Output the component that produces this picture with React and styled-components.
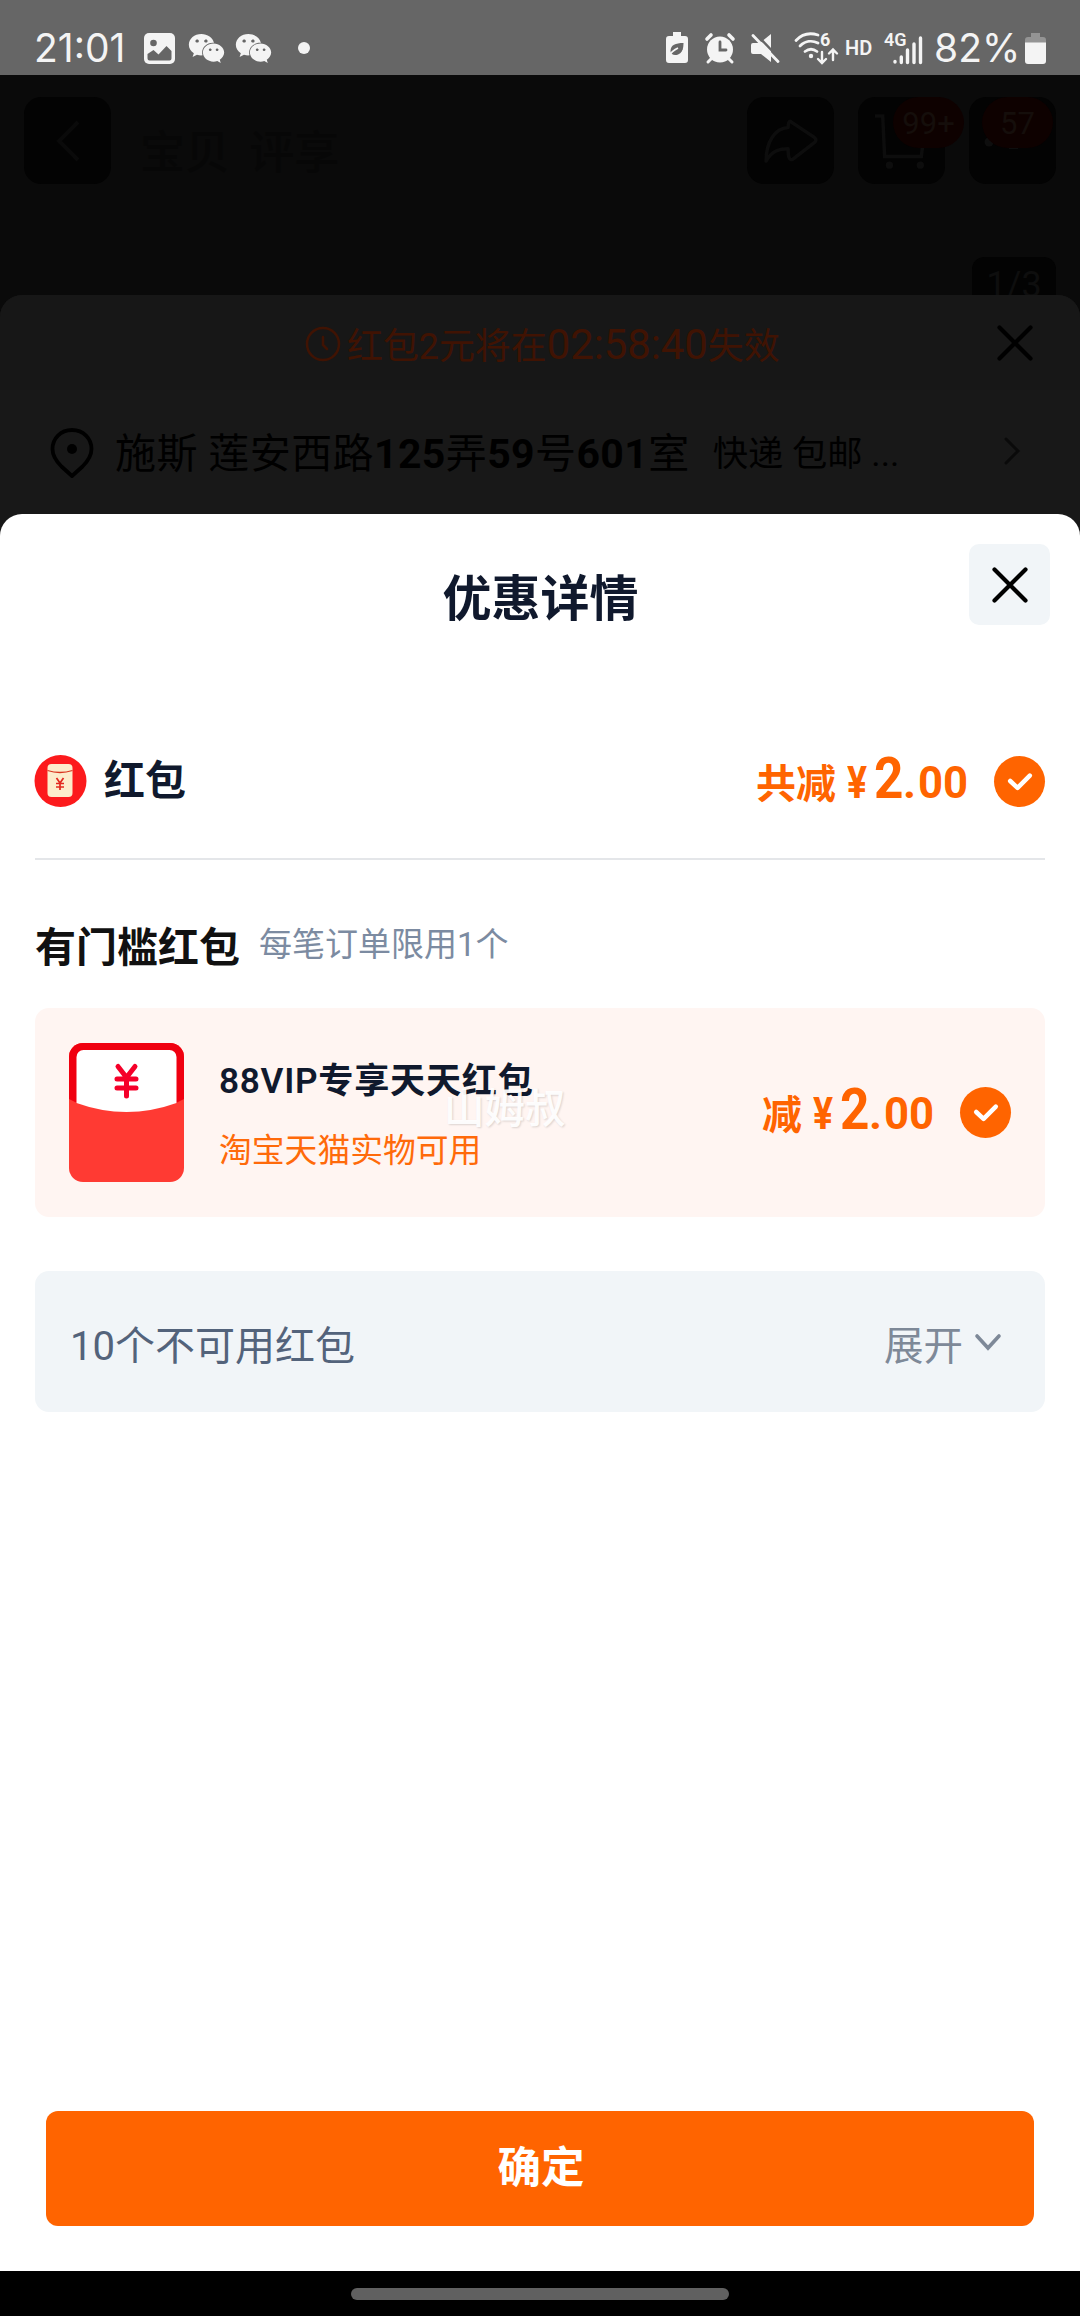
import styled, { createGlobalStyle } from "styled-components";
import { FaWeixin } from "react-icons/fa";

const GlobalStyle = createGlobalStyle`
  * {
    box-sizing: border-box;
  }

  body {
    margin: 0;
    background-color: #000;
    font-family: Roboto, "Noto Sans CJK SC", sans-serif;
  }

  svg {
    display: block;
    flex-shrink: 0;
    overflow: visible;
  }
`;

const Page = styled.div`
  width: 1080px;
  height: 2316px;
  display: flex;
  flex-direction: column;
  overflow: hidden;
  background-color: #0a0a0a;
`;

/* status bar */

const StatusBar = styled.header`
  height: 75px;
  padding: 21px 33px 0 34px;
  display: flex;
  justify-content: space-between;
  background-color: #666;
  color: #f4f4f4;
`;

const StatusGroup = styled.div`
  height: 54px;
  display: flex;
  align-items: center;
`;

const StatusText = styled.span`
  width: ${(props) => props.$width}px;
  font-family: Inter, sans-serif;
  font-size: 39px;
  line-height: 54px;
  white-space: nowrap;
`;

const StatusIcon = styled.span`
  margin-left: ${(props) => props.$gap}px;
`;

const HdText = styled.span`
  margin-left: 8px;
  width: 29px;
  font-size: 20px;
  font-weight: 600;
  line-height: 54px;
`;

const Dot = styled.i`
  width: 12px;
  height: 12px;
  margin-left: 26px;
  border-radius: 50%;
  background-color: #f4f4f4;
`;

/* dimmed product page */

const ProductHeader = styled.div`
  height: 220px;
  padding: 22px 24px 0;
  display: flex;
  flex-direction: column;
`;

const ProductNav = styled.div`
  display: flex;
  gap: 24px;
`;

const NavButton = styled.div`
  position: relative;
  width: 87px;
  height: 87px;
  display: flex;
  align-items: center;
  justify-content: center;
  border-radius: 17px;
  background-color: #030303;
`;

const NavTabs = styled.div`
  flex: 1;
  padding: 27px 0 0 5px;
  font-size: 45px;
  font-weight: 500;
  line-height: 60px;
  word-spacing: 8px;
  color: #070707;
`;

const Badge = styled.span`
  position: absolute;
  top: 0;
  left: ${(props) => props.$left}px;
  width: 71px;
  height: 51px;
  border-radius: 26px;
  background-color: #0e0100;
  color: #150e0b;
  font-size: 31px;
  line-height: 53px;
  text-align: center;
`;

const PageCount = styled.span`
  align-self: flex-end;
  width: 84px;
  height: 38px;
  margin-top: 73px;
  overflow: hidden;
  border-radius: 12px 12px 0 0;
  background-color: #030303;
  color: #0e0e0e;
  font-size: 36px;
  line-height: 56px;
  text-align: center;
`;

const OrderSheet = styled.section`
  height: 219px;
  border-radius: 22px 22px 0 0;
  background-color: #181818;
`;

const ExpireRow = styled.div`
  height: 95px;
  padding: 0 47px 0 305px;
  display: flex;
  align-items: center;
  border-radius: 22px 22px 0 0;
  background-color: #171717;
`;

const ExpireText = styled.p`
  flex: 1;
  margin: 6px 0 0 6px;
  font-size: 36px;
  line-height: 50px;
  letter-spacing: -0.1px;
  color: #401303;
`;

const Countdown = styled.span`
  font-size: 42px;
`;

const AddressRow = styled.div`
  height: 124px;
  padding: 2px 58px 0 50px;
  display: flex;
  align-items: center;
  color: #000;
`;

const Address = styled.span`
  margin: 2px 0 0 21px;
  font-size: 41px;
  font-weight: 400;
  line-height: 60px;
  letter-spacing: 0.4px;
  white-space: nowrap;

  b {
    font-weight: 700;
  }
`;

const Shipping = styled.span`
  flex: 1;
  margin: 2px 0 0 23px;
  font-size: 35.3px;
  line-height: 60px;
`;

/* discount sheet */

const SheetWrap = styled.div`
  height: 1757px;
  background-color: #181818;
`;

const Sheet = styled.section`
  height: 100%;
  display: flex;
  flex-direction: column;
  border-radius: 22px 22px 0 0;
  background-color: #fff;
`;

const SheetHeader = styled.div`
  height: 190px;
  padding: 30px 30px 0 112px;
  display: flex;
`;

const Title = styled.h1`
  flex: 1;
  margin: 20px 0 0;
  font-size: 49px;
  font-weight: 700;
  line-height: 72px;
  text-align: center;
  color: #10192d;
`;

const CloseButton = styled.button`
  width: 81px;
  height: 81px;
  padding: 0;
  display: flex;
  align-items: center;
  justify-content: center;
  border: none;
  border-radius: 10px;
  background-color: #f1f5f8;
`;

const SummaryRow = styled.div`
  height: 156px;
  margin: 0 35px;
  display: flex;
  align-items: center;
  border-bottom: 2px solid #e4e6e9;
`;

const SummaryLabel = styled.span`
  flex: 1;
  margin-left: 17px;
  font-size: 41px;
  font-weight: 700;
  line-height: 60px;
  color: #10192d;
`;

const PriceBox = styled.div`
  margin: 1px 28px 0 0;
  display: flex;
  align-items: baseline;
  color: #ff6400;
  font-weight: 700;
  line-height: 60px;
`;

const PriceLabel = styled.span`
  font-size: 40px;
`;

const PricePart = styled.span`
  display: inline-block;
  width: ${(props) => props.$width}px;
  font-size: ${(props) => props.$size}px;
  transform: scaleX(${(props) => props.$scale || 1});
  transform-origin: left;
`;

const GroupTitle = styled.div`
  height: 148px;
  padding: 58px 35px 0;
  display: flex;
`;

const GroupName = styled.span`
  font-size: 41px;
  font-weight: 700;
  line-height: 60px;
  color: #111;
`;

const GroupHint = styled.span`
  margin-left: 19px;
  font-size: 33px;
  line-height: 54px;
  color: #7c8ba1;
`;

const Coupon = styled.div`
  position: relative;
  height: 209px;
  margin: 0 35px;
  padding: 0 34px;
  display: flex;
  align-items: center;
  border-radius: 14px;
  background-color: #fff5f2;
`;

const CouponInfo = styled.div`
  flex: 1;
  margin: 6px 0 0 35px;
`;

const CouponName = styled.p`
  margin: 0;
  font-size: 35.2px;
  font-weight: 600;
  line-height: 54px;
  letter-spacing: 0.7px;
  color: #10192d;
`;

const CouponScope = styled.p`
  margin: 16px 0 0;
  font-size: 32.8px;
  line-height: 54px;
  color: #ff6a0a;
`;

const Watermark = styled.span`
  position: absolute;
  top: 71px;
  left: 409px;
  font-size: 40.5px;
  font-weight: 500;
  line-height: 60px;
  color: rgba(255, 255, 255, 0.94);
  text-shadow: 1px 1px 2px rgba(0, 0, 0, 0.14);
`;

const Unavailable = styled.div`
  height: 141px;
  margin: 54px 35px 0;
  padding: 10px 43px 0 35px;
  display: flex;
  align-items: center;
  border-radius: 14px;
  background-color: #f1f5f8;
  font-size: 40px;
  line-height: 60px;
  color: #53637b;
`;

const Expand = styled.span`
  margin-left: auto;
  display: flex;
  align-items: center;
  gap: 11px;
  font-size: 39.5px;
  color: #7e8998;
`;

const ConfirmButton = styled.button`
  height: 115px;
  margin: auto 46px 45px;
  padding: 0 0 8px 2px;
  border: none;
  border-radius: 12px;
  background-color: #ff6400;
  color: #fff;
  font-family: inherit;
  font-size: 43.5px;
  font-weight: 700;
`;

const GestureBar = styled.footer`
  height: 45px;
  padding-top: 17px;
  background-color: #000;
`;

const GesturePill = styled.div`
  width: 378px;
  height: 12px;
  margin: 0 auto;
  border-radius: 6px;
  background-color: #606060;
`;

function CloseIcon() {
  return (
    <svg width="36" height="36" viewBox="0 0 36 36" fill="none" stroke="#000" strokeWidth="4.2" strokeLinecap="round">
      <path d="M2.500 2.500l31 31M33.500 2.500l-31 31" />
    </svg>
  );
}

function CheckIcon() {
  return (
    <svg width="51" height="51" viewBox="0 0 52 52" fill="none">
      <circle cx="26" cy="26" r="26" fill="#ff6400" />
      <path d="M16.500 25.500l7.500 7 12.500-12.500" stroke="#fff" strokeWidth="4.600" strokeLinecap="round" strokeLinejoin="round" />
    </svg>
  );
}

function Price({ label }) {
  return (
    <PriceBox>
      <PriceLabel>{label}</PriceLabel>
      <PricePart $size={45} $width={27} $scale={0.83} style={{ marginLeft: 11 }}>¥</PricePart>
      <PricePart $size={57} $width={29} $scale={0.9}>2</PricePart>
      <PricePart $size={45} $width={15}>.</PricePart>
      <PricePart $size={45} $width={48} $scale={0.97}>00</PricePart>
    </PriceBox>
  );
}

function StatusIcons() {
  return (
    <StatusGroup>
      {/* battery saver */}
      <svg width="22" height="32" viewBox="0 0 22 32">
        <path d="M7 0h8v4h4a3 3 0 0 1 3 3v21a3 3 0 0 1-3 3H3a3 3 0 0 1-3-3V7a3 3 0 0 1 3-3h4z" fill="#f4f4f4" />
        <path d="M17.500 11c-8 0-13 2-13 8 0 5 7 5 10 2 2-2 3-5 3-10z" fill="#666" />
        <path d="M3 24c2-4 5-6 9-8" stroke="#f4f4f4" strokeWidth="1.800" fill="none" />
      </svg>
      <StatusIcon $gap={17}>
        <svg width="30" height="31" viewBox="0 0 30 31" fill="none" stroke="#f4f4f4" strokeLinecap="round">
          <circle cx="15" cy="16.500" r="13" fill="#f4f4f4" stroke="none" />
          <path d="M2 6l4-4M28 6l-4-4" strokeWidth="3.600" />
          <path d="M6 26l-3 3M24 26l3 3" strokeWidth="3" />
          <path d="M15 9v8h6" stroke="#666" strokeWidth="2.800" />
        </svg>
      </StatusIcon>
      <StatusIcon $gap={15}>
        <svg width="30" height="31" viewBox="0 0 30 31">
          <path d="M3 10h7L21 1v28l-10-8H3a2 2 0 0 1-2-2v-7a2 2 0 0 1 2-2z" fill="#f4f4f4" />
          <path d="M6 1l22 23" stroke="#666" strokeWidth="2.500" />
          <path d="M3 2.500l25 26" stroke="#f4f4f4" strokeWidth="2.800" strokeLinecap="round" />
        </svg>
      </StatusIcon>
      <StatusIcon $gap={14}>
        <svg width="43" height="33" viewBox="0 0 43 33" fill="none" stroke="#f4f4f4" strokeWidth="2.800" strokeLinecap="round">
          <path d="M2 8.500C8 2 16 .5 24 3M6 14c5-5 12-6 18-3M11 19.500c4-3 8-3 12 0" />
          <circle cx="17" cy="24" r="2.200" fill="#f4f4f4" stroke="none" />
          <path d="M28 20v10M24 27l4 4 4-4M39 28V18M35 21.500l4-4 4 4" strokeWidth="2.400" />
          <text x="26" y="14" fontSize="18" fontWeight="700" fill="#f4f4f4" stroke="none">6</text>
        </svg>
      </StatusIcon>
      <HdText>HD</HdText>
      <StatusIcon $gap={11}>
        <svg width="40" height="33" viewBox="0 0 40 33" fill="none" stroke="#f4f4f4" strokeWidth="3.400" strokeLinecap="round">
          <text x="-1" y="13.500" fontSize="18" fontWeight="600" fill="#f4f4f4" stroke="none">4G</text>
          <path d="M10 29.500v.5M16.300 25v5.500M22.500 18v12.500M29 12v18.500M35.500 6v24.500" />
        </svg>
      </StatusIcon>
      <StatusText $width={88} style={{ marginLeft: 9 }}>82%</StatusText>
      {/* battery level */}
      <svg width="21" height="31" viewBox="0 0 21 31" style={{ marginLeft: 3, marginRight: 1 }}>
        <path d="M6 0h9v4h3a3 3 0 0 1 3 3v3H0V7a3 3 0 0 1 3-3h3z" fill="#949494" />
        <path d="M0 9.500h21V28a3 3 0 0 1-3 3H3a3 3 0 0 1-3-3z" fill="#f4f4f4" />
      </svg>
    </StatusGroup>
  );
}

function App() {
  return (
    <>
      <GlobalStyle />
      <Page>
        <StatusBar>
          <StatusGroup>
            <StatusText $width={110}>21:01</StatusText>
            <svg width="31" height="31" viewBox="0 0 31 31">
              <rect width="31" height="31" rx="5" fill="#f4f4f4" />
              <circle cx="9.500" cy="10" r="3.300" fill="#666" />
              <path d="M3.500 21l6-4 5 4.500 8-8.500 5 5v7.500a2 2 0 0 1-2 2h-20a2 2 0 0 1-2-2z" fill="#666" />
            </svg>
            <StatusIcon $gap={13}><FaWeixin size={37} /></StatusIcon>
            <StatusIcon $gap={10}><FaWeixin size={37} /></StatusIcon>
            <Dot />
          </StatusGroup>
          <StatusIcons />
        </StatusBar>

        <ProductHeader>
          <ProductNav>
            <NavButton>
              <svg width="24" height="42" viewBox="0 0 24 42" fill="none" stroke="#0a0a0a" strokeWidth="4">
                <path d="M22 2L3 21l19 19" />
              </svg>
            </NavButton>
            <NavTabs>宝贝 评享</NavTabs>
            <NavButton>
              <svg width="56" height="46" viewBox="0 0 58 48" fill="none" stroke="#0d0d0d" strokeWidth="3.600" strokeLinejoin="round">
                <path d="M29 4c-2-2-3 2-3 6C12 11 3 25 3 45c6-11 14-13 23-13 0 8 1 13 5 11l22-17q4-3 0-6z" />
              </svg>
            </NavButton>
            <NavButton>
              <svg width="58" height="56" viewBox="0 0 60 58" fill="none" stroke="#0d0d0d" strokeWidth="3.600">
                <path d="M2 3h8l2 42h38l4-32H22" />
                <circle cx="17" cy="54" r="2" />
                <circle cx="49" cy="54" r="2" />
              </svg>
              <Badge $left={35}>99+</Badge>
            </NavButton>
            <NavButton>
              <svg width="60" height="20" viewBox="0 0 60 20" fill="#0e0e0e">
                <circle cx="6" cy="11" r="4.500" />
                <path d="M26 15h9v3h-9z" />
              </svg>
              <Badge $left={13}>57</Badge>
            </NavButton>
          </ProductNav>
          <PageCount>1/3</PageCount>
        </ProductHeader>

        <OrderSheet>
          <ExpireRow>
            <svg width="36" height="36" viewBox="0 0 36 36" fill="none" stroke="#401303" strokeWidth="2.500" strokeLinecap="round" style={{ marginTop: 2 }}>
              <circle cx="18" cy="18" r="16" />
              <path d="M18 11v8l4 4" />
            </svg>
            <ExpireText>
              红包2元将在<Countdown>02:58:40</Countdown>失效
            </ExpireText>
            <CloseIcon />
          </ExpireRow>
          <AddressRow>
            <svg width="44" height="50" viewBox="0 0 44 50" fill="none" stroke="#000" strokeWidth="3.800" strokeLinejoin="round">
              <path d="M22 2C10.500 2 2.500 10.500 2.500 21c0 7 4 12.500 9 17.500L22 48l10.500-9.500c5-5 9-10.500 9-17.500C41.500 10.500 33.500 2 22 2z" />
              <circle cx="22" cy="21" r="5" fill="#000" stroke="none" />
            </svg>
            <Address>
              施斯 莲安西路<b>125</b>弄<b>59</b>号<b>601</b>室
            </Address>
            <Shipping>快递 包邮 ...</Shipping>
            <svg width="20" height="28" viewBox="0 0 20 28" fill="none" stroke="#0a0a0a" strokeWidth="3" strokeLinecap="round" style={{ marginTop: -5 }}>
              <path d="M4 2l12 12L4 26" />
            </svg>
          </AddressRow>
        </OrderSheet>

        <SheetWrap>
          <Sheet>
            <SheetHeader>
              <Title>优惠详情</Title>
              <CloseButton type="button">
                <CloseIcon />
              </CloseButton>
            </SheetHeader>

            <SummaryRow>
              <svg width="52" height="52" viewBox="0 0 52 52">
                <circle cx="25.500" cy="26" r="26" fill="#fc1a1c" />
                <rect x="12.500" y="9" width="25" height="33" rx="4" fill="#fdeccb" />
                <path d="M12.500 15.500q12.500 4 25 0" stroke="#d9351f" strokeWidth="1.300" fill="none" />
                <path d="M21.500 23l3.500 5 3.500-5M25 28v7M21 28.500h8M21 32h8" stroke="#e3281e" strokeWidth="1.700" fill="none" />
              </svg>
              <SummaryLabel>红包</SummaryLabel>
              <Price label="共减" />
              <CheckIcon />
            </SummaryRow>

            <GroupTitle>
              <GroupName>有门槛红包</GroupName>
              <GroupHint>每笔订单限用1个</GroupHint>
            </GroupTitle>

            <Coupon>
              <svg width="115" height="139" viewBox="0 0 115 139">
                <rect width="115" height="139" rx="14" fill="#ff3a33" />
                <path d="M0 56V14A14 14 0 0 1 14 0h87a14 14 0 0 1 14 14v42l-8 4H8z" fill="#f00010" />
                <path d="M7.500 60V14a7 7 0 0 1 7-7h86a7 7 0 0 1 7 7v46q-50 18-100 0z" fill="#fff" />
                <path d="M49 23.500l8.500 11 8.500-11M57.500 35v18M48 36h19M48 45h19" stroke="#f50029" strokeWidth="5" strokeLinecap="round" fill="none" />
              </svg>
              <CouponInfo>
                <CouponName>88VIP专享天天红包</CouponName>
                <CouponScope>淘宝天猫实物可用</CouponScope>
              </CouponInfo>
              <Price label="减" />
              <CheckIcon />
              <Watermark>山姆叔</Watermark>
            </Coupon>

            <Unavailable>
              10个不可用红包
              <Expand>
                展开
                <svg width="28" height="18" viewBox="0 0 28 18" fill="none" stroke="#7e8998" strokeWidth="3.600" strokeLinecap="round" style={{ marginTop: -9 }}>
                  <path d="M3 3l11 12L25 3" />
                </svg>
              </Expand>
            </Unavailable>

            <ConfirmButton type="button">确定</ConfirmButton>
          </Sheet>
        </SheetWrap>

        <GestureBar>
          <GesturePill />
        </GestureBar>
      </Page>
    </>
  );
}

export default App;
